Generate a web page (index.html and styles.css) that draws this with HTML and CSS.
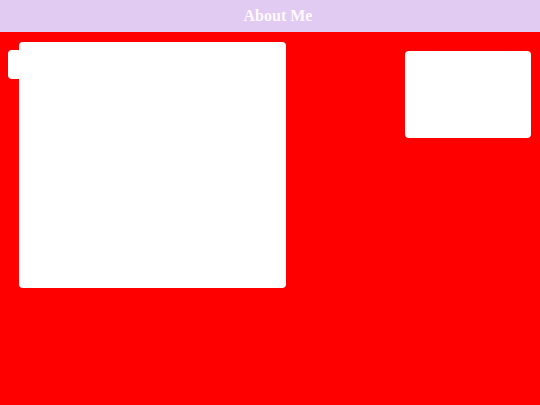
FILE: index.html
```html
<!DOCTYPE html>
<html>
<head>
<meta charset="utf-8">
<title>About Me</title>
<link rel="stylesheet" href="styles.css">
</head>
<body>
<header class="topbar"><h1 class="title">About Me</h1></header>
<main class="content">
  <section class="card card-main"></section>
  <aside class="card card-side"></aside>
</main>
</body>
</html>
```
FILE: styles.css
```css
html, body {
  margin: 0;
  padding: 0;
  height: 100%;
}
body {
  background: #ff0000;
  font-family: "Liberation Serif", serif;
  display: flex;
  flex-direction: column;
}
.topbar {
  height: 32px;
  background: #e1cbf2;
  display: flex;
  align-items: center;
  justify-content: center;
  padding-left: 16px;
}
.title {
  margin: 0;
  font-size: 16px;
  font-weight: bold;
  color: #fdf9ff;
  line-height: 1;
}
.content {
  flex: 1;
  display: flex;
  align-items: flex-start;
  justify-content: space-between;
  padding: 10px 9px 0 19px;
}
.card {
  background: #ffffff;
  border-radius: 4px;
}
.card-main {
  position: relative;
  width: 267px;
  height: 246px;
}
.card-main::before {
  content: "";
  position: absolute;
  left: -11px;
  top: 8px;
  width: 14px;
  height: 29px;
  background: #ffffff;
  border-radius: 4px;
}
.card-side {
  width: 126px;
  height: 87px;
  margin-top: 9px;
}
```
